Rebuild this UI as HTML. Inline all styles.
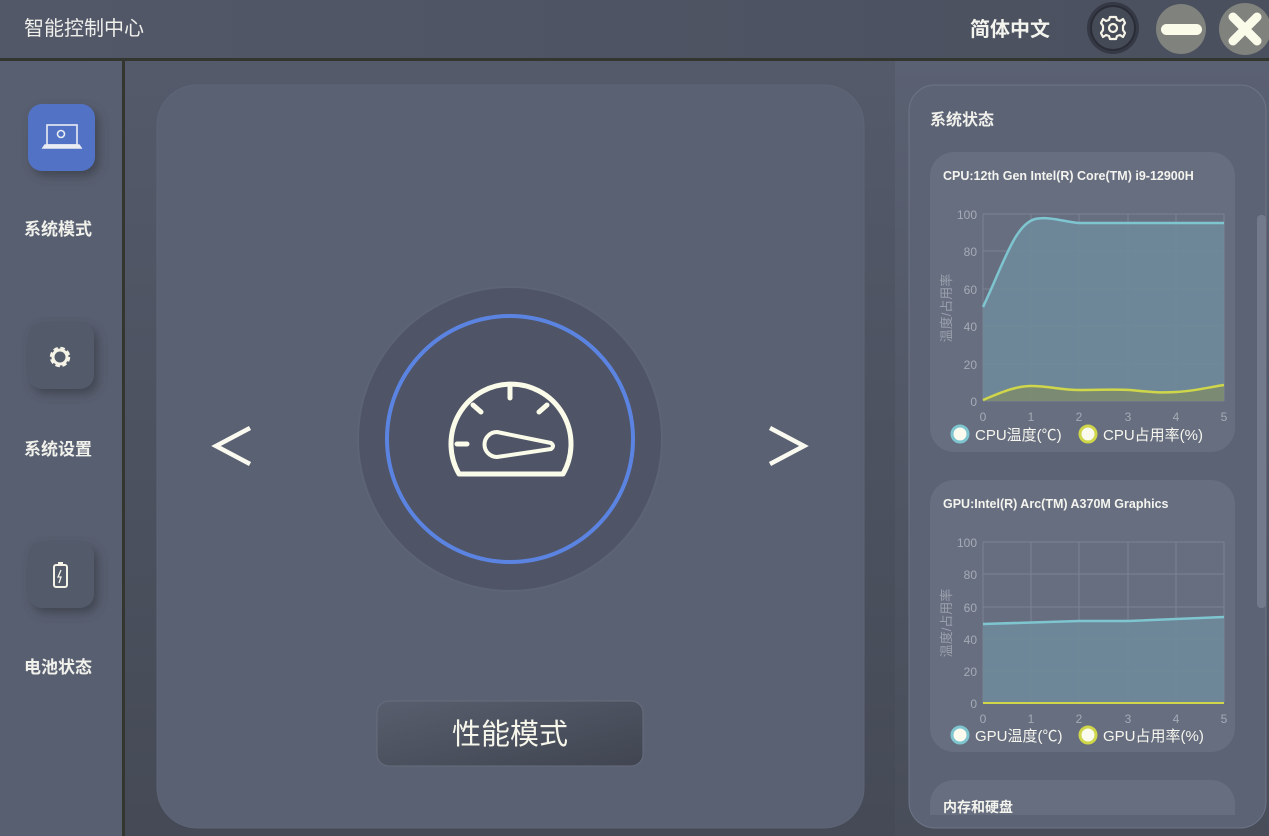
<!DOCTYPE html>
<html><head><meta charset="utf-8"><style>
html,body{margin:0;padding:0;width:1269px;height:836px;overflow:hidden;background:#565d6e;font-family:"Liberation Sans","Noto Sans CJK SC",sans-serif}
svg{display:block}
</style></head><body>
<svg width="1269" height="836" viewBox="0 0 1269 836" xmlns="http://www.w3.org/2000/svg" font-family="'Liberation Sans','Noto Sans CJK SC',sans-serif">
<defs>
<linearGradient id="top" x1="0" x2="1" y1="0" y2="0"><stop offset="0" stop-color="#525868"/><stop offset="1" stop-color="#4a505e"/></linearGradient>
<linearGradient id="mainbg" x1="0" x2="0" y1="0" y2="1"><stop offset="0" stop-color="#545a6a"/><stop offset="1" stop-color="#454a56"/></linearGradient>
<linearGradient id="rbg" x1="0" x2="0" y1="0" y2="1"><stop offset="0" stop-color="#5a6172"/><stop offset="1" stop-color="#484d59"/></linearGradient>
<linearGradient id="btn" x1="0" x2="1" y1="0" y2="1"><stop offset="0" stop-color="#585e6d"/><stop offset="1" stop-color="#404551"/></linearGradient>
<filter id="sh" x="-30%" y="-30%" width="160%" height="160%"><feDropShadow dx="4" dy="5" stdDeviation="5" flood-color="#3a3f4a" flood-opacity="0.8"/></filter>
</defs>
<rect width="1269" height="836" fill="#575e6f"/>
<rect x="125" y="61" width="770" height="775" fill="url(#mainbg)"/>
<rect x="895" y="61" width="374" height="775" fill="url(#rbg)"/>
<rect width="1269" height="59" fill="url(#top)"/>
<rect y="58" width="1269" height="3" fill="#32362f"/>
<rect x="0" y="61" width="122" height="775" fill="#585f70"/>
<rect x="122" y="61" width="3" height="775" fill="#32362f"/>
<!-- title bar -->
<text x="24" y="35" font-size="20" fill="#eeeeea">智能控制中心</text>
<text x="970" y="36" font-size="20" font-weight="bold" fill="#f4f4ee">简体中文</text>
<circle cx="1113" cy="28" r="26" fill="#353946"/>
<circle cx="1113" cy="28" r="22" fill="#454a57" stroke="#2a2d36" stroke-width="2"/>
<g transform="translate(1113,28)" fill="none" stroke="#f5f3e6" stroke-width="2.2">
<path d="M-3,-11 L3,-11 L4,-8 L7,-7 L10,-9 L12,-5 L10,-2 L10,2 L12,5 L10,9 L7,7 L4,8 L3,11 L-3,11 L-4,8 L-7,7 L-10,9 L-12,5 L-10,2 L-10,-2 L-12,-5 L-10,-9 L-7,-7 L-4,-8 Z" stroke-linejoin="round"/>
<circle r="4"/></g>
<circle cx="1181" cy="29" r="25" fill="#80827d"/>
<rect x="1161" y="24" width="41" height="11" rx="5.5" fill="#fbfbe9"/>
<circle cx="1245" cy="29" r="26" fill="#80827d"/>
<path d="M1233,17 L1257,41 M1257,17 L1233,41" stroke="#fbfbe9" stroke-width="9" stroke-linecap="round"/>
<!-- sidebar -->
<rect x="28" y="104" width="67" height="67" rx="14" fill="#5172c5" filter="url(#sh)"/>
<g fill="none" stroke="#e9ecf2" stroke-width="1.6"><rect x="47" y="125" width="30" height="20"/><path d="M43,148 L81,148 L79,145 L45,145 Z" fill="#e9ecf2"/><circle cx="61" cy="134" r="3.5"/></g>
<text x="24" y="235" font-size="17" font-weight="bold" fill="#f1f1ec">系统模式</text>
<rect x="28" y="322" width="66" height="67" rx="14" fill="#535a6a" filter="url(#sh)"/>
<circle cx="60" cy="357" r="8" fill="none" stroke="#f5f3e6" stroke-width="4.5" stroke-dasharray="4 2.3"/>
<circle cx="60" cy="357" r="7" fill="none" stroke="#f5f3e6" stroke-width="3"/>
<text x="24" y="455" font-size="17" font-weight="bold" fill="#f1f1ec">系统设置</text>
<rect x="28" y="541" width="66" height="67" rx="14" fill="#535a6a" filter="url(#sh)"/>
<rect x="54" y="565" width="13" height="22" rx="2" fill="none" stroke="#f5f3e6" stroke-width="2"/>
<rect x="58" y="562" width="5" height="3" fill="#f5f3e6"/>
<path d="M61,570 L58,577 L61,577 L59,583" stroke="#f5f3e6" stroke-width="1.3" fill="none"/>
<text x="24" y="673" font-size="17" font-weight="bold" fill="#f1f1ec">电池状态</text>
<!-- main card -->
<rect x="157" y="85" width="707" height="743" rx="40" fill="#5a6172" stroke="#5e6576" stroke-width="1"/>
<path d="M250,428 L216,446 L250,464" fill="none" stroke="#fafaf0" stroke-width="4.5"/>
<path d="M770,428 L804,446 L770,464" fill="none" stroke="#fafaf0" stroke-width="4.5"/>
<circle cx="510" cy="439" r="152" fill="#4f5566" stroke="#5d6475" stroke-width="2"/>
<circle cx="510" cy="439" r="123" fill="none" stroke="#5b84e2" stroke-width="4"/>
<g fill="none" stroke="#fbfbea" stroke-width="5" stroke-linecap="round" stroke-linejoin="round">
<path d="M459,474 A60,60 0 1 1 563,474 Z"/>
<path d="M510,387 L510,398 M473,405 L481,412 M547,405 L539,412 M457,444 L467,444"/>
<path d="M497,432 L551,443 Q555,446 551,449 L497,457 A12.5,12.5 0 0 1 497,432 Z" stroke-width="4"/>
</g>
<rect x="377" y="701" width="266" height="65" rx="12" fill="url(#btn)" stroke="#676d7c" stroke-width="1"/>
<text x="510" y="744" font-size="29" fill="#f6f6ea" text-anchor="middle">性能模式</text>
<!-- right panel -->
<rect x="909" y="85" width="357" height="743" rx="26" fill="#5c6375" stroke="#6d7486" stroke-width="1"/>
<rect x="1257" y="215" width="9" height="393" rx="4" fill="#737a8b"/>
<text x="930" y="125" font-size="16" font-weight="bold" fill="#f1f1ec">系统状态</text>
<rect x="930" y="152" width="305" height="300" rx="24" fill="#676e80"/>
<text x="943" y="180" font-size="12.5" font-weight="bold" fill="#f4f4ee">CPU:12th Gen Intel(R) Core(TM) i9-12900H</text>
<g stroke="#7a8293" stroke-width="1">
<path d="M983,214 H1224 M983,251 H1224 M983,289 H1224 M983,326 H1224 M983,364 H1224 M983,401 H1224"/>
<path d="M983,214 V401 M1031,214 V401 M1079,214 V401 M1128,214 V401 M1176,214 V401 M1224,214 V401"/>
</g>
<path d="M983,307 C1005,260 1015,225 1035,219 C1050,216 1065,222 1079,223 L1224,223 L1224,401 L983,401 Z" fill="#6e8a9a" opacity="0.9"/>
<path d="M983,307 C1005,260 1015,225 1035,219 C1050,216 1065,222 1079,223 L1224,223" fill="none" stroke="#7ec5d0" stroke-width="2.5"/>
<path d="M983,400 C1000,393 1015,386 1031,386 C1050,386 1060,390 1079,390 C1100,390 1115,389 1130,390 C1150,392 1160,393 1176,392 C1195,391 1210,387 1224,385 L1224,401 L983,401 Z" fill="#7e8c6a" opacity="0.8"/>
<path d="M983,400 C1000,393 1015,386 1031,386 C1050,386 1060,390 1079,390 C1100,390 1115,389 1130,390 C1150,392 1160,393 1176,392 C1195,391 1210,387 1224,385" fill="none" stroke="#cfd64a" stroke-width="2.5"/>
<g font-size="12" fill="#a5abb5" text-anchor="end">
<text x="977" y="219">100</text><text x="977" y="256">80</text><text x="977" y="294">60</text><text x="977" y="331">40</text><text x="977" y="369">20</text><text x="977" y="406">0</text></g>
<g font-size="12" fill="#a5abb5" text-anchor="middle">
<text x="983" y="421">0</text><text x="1031" y="421">1</text><text x="1079" y="421">2</text><text x="1128" y="421">3</text><text x="1176" y="421">4</text><text x="1224" y="421">5</text></g>
<text transform="translate(951,308) rotate(-90)" font-size="13" fill="#9aa0ab" text-anchor="middle">温度/占用率</text>
<circle cx="960" cy="434" r="8" fill="#fafaee" stroke="#7ec5d0" stroke-width="3"/>
<text x="975" y="440" font-size="15" fill="#f6f6ee">CPU温度(℃)</text>
<circle cx="1088" cy="434" r="8" fill="#fafaee" stroke="#cfd64a" stroke-width="3"/>
<text x="1103" y="440" font-size="15" fill="#f6f6ee">CPU占用率(%)</text>
<rect x="930" y="480" width="305" height="272" rx="24" fill="#676e80"/>
<text x="943" y="508" font-size="12.5" font-weight="bold" fill="#f4f4ee">GPU:Intel(R) Arc(TM) A370M Graphics</text>
<g stroke="#7a8293" stroke-width="1">
<path d="M983,542 H1224 M983,574 H1224 M983,607 H1224 M983,639 H1224 M983,671 H1224 M983,703 H1224"/>
<path d="M983,542 V703 M1031,542 V703 M1079,542 V703 M1128,542 V703 M1176,542 V703 M1224,542 V703"/>
</g>
<path d="M983,624 L1079,621 L1128,621 L1224,617 L1224,703 L983,703 Z" fill="#6e8a9a" opacity="0.9"/>
<path d="M983,624 L1079,621 L1128,621 L1224,617" fill="none" stroke="#7ec5d0" stroke-width="2.5"/>
<path d="M983,703 H1224" stroke="#cfd64a" stroke-width="2"/>
<g font-size="12" fill="#a5abb5" text-anchor="end">
<text x="977" y="547">100</text><text x="977" y="579">80</text><text x="977" y="612">60</text><text x="977" y="644">40</text><text x="977" y="676">20</text><text x="977" y="708">0</text></g>
<g font-size="12" fill="#a5abb5" text-anchor="middle">
<text x="983" y="723">0</text><text x="1031" y="723">1</text><text x="1079" y="723">2</text><text x="1128" y="723">3</text><text x="1176" y="723">4</text><text x="1224" y="723">5</text></g>
<text transform="translate(951,623) rotate(-90)" font-size="13" fill="#9aa0ab" text-anchor="middle">温度/占用率</text>
<circle cx="960" cy="735" r="8" fill="#fafaee" stroke="#7ec5d0" stroke-width="3"/>
<text x="975" y="741" font-size="15" fill="#f6f6ee">GPU温度(℃)</text>
<circle cx="1088" cy="735" r="8" fill="#fafaee" stroke="#cfd64a" stroke-width="3"/>
<text x="1103" y="741" font-size="15" fill="#f6f6ee">GPU占用率(%)</text>
<path d="M930,815 V804 A24,24 0 0 1 954,780 H1211 A24,24 0 0 1 1235,804 V815 Z" fill="#676e80"/>
<text x="943" y="812" font-size="14" font-weight="bold" fill="#f4f4ee">内存和硬盘</text>
</svg>
</body></html>
